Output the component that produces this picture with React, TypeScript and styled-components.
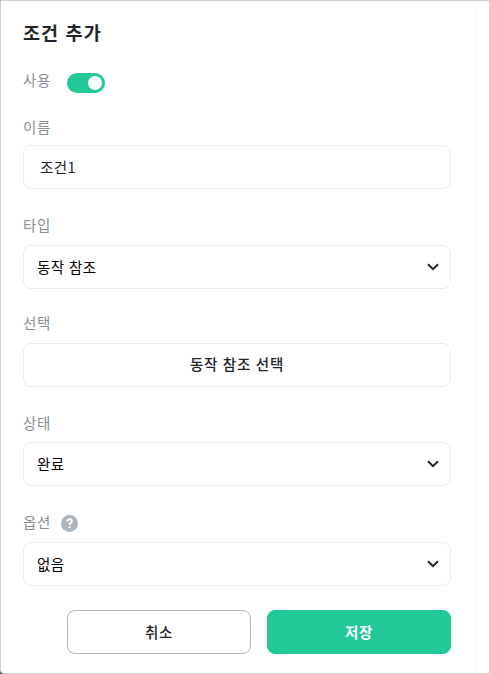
import React, { useState } from "react";
import styled, { createGlobalStyle } from "styled-components";

const GlobalStyle = createGlobalStyle`
  *, *::before, *::after { box-sizing: border-box; }
  html, body { margin: 0; padding: 0; background: #fff; }
  body, button, input {
    font-family: "Noto Sans CJK KR", "Noto Sans", sans-serif;
    font-size: 14.5px;
  }
`;

const Backdrop = styled.div`
  width: 490px;
  height: 674px;
  background: linear-gradient(90deg, #555 0 4px, #d0d0d0 4px);
`;

const Panel = styled.main`
  display: flex;
  width: 490px;
  height: 674px;
  overflow: hidden;
  border: 1px solid #d0d0d0;
  border-radius: 0 0 0 4px;
  background: #fff;
`;

const Content = styled.form`
  width: 474px;
  padding: 19px 24px 0 22px;
`;

const ScrollTrack = styled.div`
  flex: 1;
  border-left: 2px solid #fafafa;
`;

const Title = styled.h1`
  margin: 0;
  height: 24px;
  font-size: 18.5px;
  line-height: 24px;
  font-weight: 700;
  letter-spacing: 1.1px;
  word-spacing: 1px;
  color: #212529;
`;

const ToggleRow = styled.div`
  display: flex;
  gap: 16px;
  height: 47px;
  margin-top: 26px;
`;

const Label = styled.label`
  display: block;
  height: 20px;
  line-height: 20px;
  letter-spacing: 0.7px;
  color: #868e96;
`;

const Switch = styled.button<{ $on: boolean }>`
  display: flex;
  align-items: center;
  justify-content: ${(p) => (p.$on ? "flex-end" : "flex-start")};
  width: 38px;
  height: 20px;
  margin: 3px 0 0;
  padding: 0 3px;
  border: 0;
  border-radius: 10px;
  background: ${(p) => (p.$on ? "#22c997" : "#adb5bd")};
`;

const Knob = styled.span`
  width: 14px;
  height: 14px;
  border-radius: 50%;
  background: #fff;
`;

const Field = styled.div<{ $height: number; $gap?: number }>`
  display: flex;
  flex-direction: column;
  justify-content: space-between;
  height: ${(p) => p.$height}px;
  margin-top: ${(p) => p.$gap ?? 0}px;
`;

const LabelRow = styled.div`
  display: flex;
  gap: 10px;
`;

const HelpIcon = styled.svg`
  margin-top: 3px;
`;

const TextInput = styled.input`
  width: 100%;
  height: 44px;
  padding: 0 16px 1px;
  border: 1px solid #e9ecef;
  border-radius: 8px;
  outline: 0;
  letter-spacing: 0.4px;
  color: #212529;
  background: #fff;
`;

const SelectBox = styled.button`
  display: flex;
  align-items: center;
  justify-content: space-between;
  width: 100%;
  height: 44px;
  padding: 0 11px 2px 13px;
  border: 1px solid #e9ecef;
  border-radius: 8px;
  letter-spacing: 0.5px;
  word-spacing: 0.6px;
  color: #000;
  background: #fff;
`;

const ActionButton = styled.button<{ $kind: "plain" | "outline" | "primary" }>`
  flex: 1;
  height: 44px;
  min-height: 44px;
  padding: 0 0 1px;
  border: 1px solid
    ${(p) => ({ plain: "#e9ecef", outline: "#adb5bd", primary: "#22c997" })[p.$kind]};
  border-radius: 8px;
  font-weight: ${(p) => (p.$kind === "primary" ? 700 : 500)};
  letter-spacing: 0.6px;
  word-spacing: 0.6px;
  color: ${(p) => (p.$kind === "primary" ? "#fff" : "#212529")};
  background: ${(p) => (p.$kind === "primary" ? "#22c997" : "#fff")};
`;

const PickButton = styled(ActionButton)`
  flex: none;
  padding-bottom: 3px;
  letter-spacing: 0.8px;
`;

const Footer = styled.div`
  display: flex;
  gap: 16px;
  margin: 24px 0 0 44px;
`;

const ChevronIcon = styled.svg`
  margin-top: 2px;
`;

const Chevron = () => (
  <ChevronIcon width="12" height="8" viewBox="0 0 12 8" fill="none" aria-hidden="true">
    <path d="M1 1.2L6 6.2L11 1.2" stroke="#212529" strokeWidth="2" />
  </ChevronIcon>
);

const Help = () => (
  <HelpIcon width="17" height="17" viewBox="0 0 17 17" fill="none" aria-hidden="true">
    <circle cx="8.5" cy="8.5" r="8.5" fill="#adb5bd" />
    <path
      d="M6.2 6.3C6.4 4.9 7.3 4.2 8.6 4.2C10 4.2 10.9 5 10.9 6.1C10.9 7.8 8.6 7.9 8.6 9.9"
      stroke="#fff"
      strokeWidth="1.9"
    />
    <path d="M7.6 11.2H9.6V13.1H7.6Z" fill="#fff" />
  </HelpIcon>
);

export default function App() {
  const [on, setOn] = useState(true);
  const [name, setName] = useState("조건1");

  return (
    <Backdrop>
      <GlobalStyle />
      <Panel>
        <Content onSubmit={(e) => e.preventDefault()}>
          <Title>조건 추가</Title>
          <ToggleRow>
            <Label>사용</Label>
            <Switch
              type="button"
              role="switch"
              aria-checked={on}
              aria-label="사용"
              $on={on}
              onClick={() => setOn(!on)}
            >
              <Knob />
            </Switch>
          </ToggleRow>
          <Field $height={72}>
            <Label htmlFor="name">이름</Label>
            <TextInput id="name" value={name} onChange={(e) => setName(e.target.value)} />
          </Field>
          <Field $height={74} $gap={26}>
            <Label>타입</Label>
            <SelectBox type="button">
              동작 참조
              <Chevron />
            </SelectBox>
          </Field>
          <Field $height={74} $gap={24}>
            <Label>선택</Label>
            <PickButton type="button" $kind="plain">
              동작 참조 선택
            </PickButton>
          </Field>
          <Field $height={73} $gap={26}>
            <Label>상태</Label>
            <SelectBox type="button">
              완료
              <Chevron />
            </SelectBox>
          </Field>
          <Field $height={74} $gap={26}>
            <LabelRow>
              <Label>옵션</Label>
              <Help />
            </LabelRow>
            <SelectBox type="button">
              없음
              <Chevron />
            </SelectBox>
          </Field>
          <Footer>
            <ActionButton type="button" $kind="outline">
              취소
            </ActionButton>
            <ActionButton type="submit" $kind="primary">
              저장
            </ActionButton>
          </Footer>
        </Content>
        <ScrollTrack />
      </Panel>
    </Backdrop>
  );
}
